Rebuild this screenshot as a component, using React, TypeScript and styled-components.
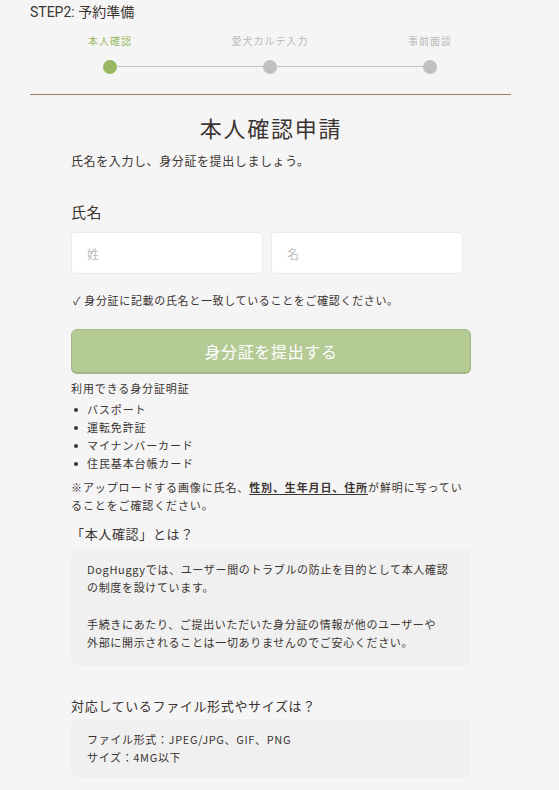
import styled, { createGlobalStyle } from "styled-components";

const GlobalStyle = createGlobalStyle`
  body {
    margin: 0;
    background: #f5f5f5;
    color: #3b3431;
    font-family: "Noto Sans CJK JP", "Noto Sans", sans-serif;
  }
`;

const steps = ["本人確認", "愛犬カルテ入力", "事前面談"];
const documents = ["バスポート", "運転免許証", "マイナンバーカード", "住民基本台帳カード"];

const App = (): JSX.Element => {
  return (
    <>
      <GlobalStyle />
      <Page>
        <StepTitle>STEP2: 予約準備</StepTitle>
        <Stepper>
          <StepLine />
          {steps.map((label, i) => (
            <Step key={label}>
              <StepLabel $active={i === 0}>{label}</StepLabel>
              <StepDot $active={i === 0} />
            </Step>
          ))}
        </Stepper>
        <Divider />

        <Content>
          <Title>本人確認申請</Title>
          <Lead>氏名を入力し、身分証を提出しましょう。</Lead>

          <FieldLabel>氏名</FieldLabel>
          <InputRow>
            <Input placeholder="姓" />
            <Input placeholder="名" />
          </InputRow>
          <CheckNote>✓ 身分証に記載の氏名と一致していることをご確認ください。</CheckNote>

          <SubmitButton type="button">身分証を提出する</SubmitButton>

          <SmallText>利用できる身分証明証</SmallText>
          <DocList>
            {documents.map((doc) => (
              <DocItem key={doc}>{doc}</DocItem>
            ))}
          </DocList>
          <SmallText>
            ※アップロードする画像に氏名、<Strong>性別、生年月日、住所</Strong>が鮮明に写ってい
            <br />
            ることをご確認ください。
          </SmallText>

          <Question>「本人確認」とは？</Question>
          <InfoBox>
            <p>
              DogHuggyでは、ユーザー間のトラブルの防止を目的として本人確認
              <br />
              の制度を設けています。
            </p>
            <p>
              手続きにあたり、ご提出いただいた身分証の情報が他のユーザーや
              <br />
              外部に開示されることは一切ありませんのでご安心ください。
            </p>
          </InfoBox>

          <Question $spaced>対応しているファイル形式やサイズは？</Question>
          <InfoBox $tight>
            <p>
              ファイル形式：JPEG/JPG、GIF、PNG
              <br />
              サイズ：4MG以下
            </p>
          </InfoBox>
        </Content>
      </Page>
    </>
  );
};

const Page = styled.div`
  width: 481px;
  padding: 2px 0 14px 30px;
`;

const StepTitle = styled.h1`
  margin: 0;
  font-family: Roboto, "Noto Sans CJK JP", sans-serif;
  font-size: 14px;
  font-weight: 400;
  line-height: 20px;
  color: #3b3431;
`;

const Stepper = styled.div`
  position: relative;
  display: flex;
  width: 480px;
  margin-top: 12px;
`;

const StepLine = styled.div`
  position: absolute;
  left: 80px;
  right: 80px;
  top: 32px;
  height: 1px;
  background: #c2c2c2;
`;

const Step = styled.div`
  flex: 0 0 160px;
  display: flex;
  flex-direction: column;
  align-items: center;
  gap: 12px;
`;

const StepLabel = styled.span<{ $active?: boolean }>`
  font-size: 10px;
  line-height: 14px;
  letter-spacing: 0.1em;
  color: ${({ $active }) => ($active ? "#98b862" : "#b9b9b9")};
`;

const StepDot = styled.span<{ $active?: boolean }>`
  position: relative;
  width: 14px;
  height: 14px;
  border-radius: 50%;
  background: ${({ $active }) => ($active ? "#98b862" : "#c0c0c0")};
`;

const Divider = styled.hr`
  margin: 20px 0 0;
  border: none;
  height: 1px;
  background: #a07e62;
`;

const Content = styled.main`
  width: 400px;
  margin-left: 41px;
  display: flex;
  flex-direction: column;
`;

const Title = styled.h2`
  margin: 17px 0 0;
  text-align: center;
  font-size: 22px;
  font-weight: 400;
  line-height: 30px;
  letter-spacing: 0.08em;
`;

const Lead = styled.p`
  margin: 10px 0 0;
  font-size: 12px;
  line-height: 18px;
  letter-spacing: 0.05em;
`;

const FieldLabel = styled.label`
  margin-top: 31px;
  font-size: 15px;
  line-height: 22px;
  letter-spacing: 0.03em;
`;

const InputRow = styled.div`
  display: grid;
  grid-template-columns: 192px 192px;
  gap: 8px;
  margin-top: 9px;
`;

const Input = styled.input`
  box-sizing: border-box;
  height: 42px;
  padding: 0 15px;
  border: 1px solid #ebebeb;
  border-radius: 5px;
  background: #fff;
  font-family: inherit;
  font-size: 12px;
  color: #3b3431;
  outline: none;

  &::placeholder {
    color: #bdbdbd;
  }
`;

const CheckNote = styled.p`
  margin: 17px 0 0 2px;
  font-size: 11px;
  line-height: 18px;
  letter-spacing: 0.06em;
`;

const SubmitButton = styled.button`
  box-sizing: border-box;
  height: 44px;
  margin-top: 20px;
  border: 1.5px solid #a2b986;
  border-radius: 6px;
  background: #b5cb95;
  box-shadow: 0 1px 0 #a2b986;
  color: #fff;
  font-family: inherit;
  font-size: 16px;
  letter-spacing: 0.04em;
`;

const SmallText = styled.p`
  margin: 6px 0 0;
  font-size: 11px;
  line-height: 18px;
  letter-spacing: 0.08em;
`;

const DocList = styled.ul`
  margin: 3px 0 0;
  padding: 0;
  list-style: none;
`;

const DocItem = styled.li`
  position: relative;
  padding-left: 16px;
  font-size: 11px;
  line-height: 18px;
  letter-spacing: 0.08em;

  &::before {
    content: "";
    position: absolute;
    left: 3px;
    top: 8px;
    width: 4px;
    height: 4px;
    border-radius: 50%;
    background: #3b3431;
  }
`;

const Strong = styled.strong`
  font-weight: 700;
  text-decoration: underline;
  text-underline-offset: 2px;
`;

const Question = styled.h3<{ $spaced?: boolean }>`
  margin: ${({ $spaced }) => ($spaced ? "30px" : "10px")} 0 0;
  font-size: 13px;
  font-weight: 400;
  line-height: 20px;
  letter-spacing: 0.05em;
`;

const InfoBox = styled.div<{ $tight?: boolean }>`
  margin-top: ${({ $tight }) => ($tight ? "3px" : "5px")};
  padding: 11px 12px ${({ $tight }) => ($tight ? "12px" : "15px")} 16px;
  border-radius: 8px;
  background: #f0f0f0;

  p {
    margin: 0;
    font-size: 11px;
    line-height: 18px;
    letter-spacing: 0.06em;
    white-space: nowrap;
  }

  p + p {
    margin-top: 19px;
  }
`;

export default App;
